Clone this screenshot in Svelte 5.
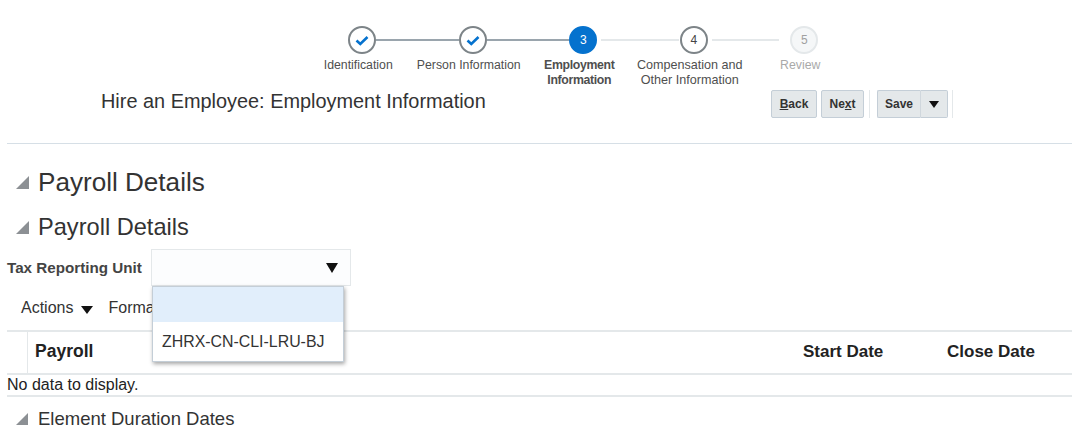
<script lang="ts">
	const steps = [
		{ id: 1, label: 'Identification', state: 'done' },
		{ id: 2, label: 'Person Information', state: 'done' },
		{ id: 3, label: 'Employment Information', state: 'active' },
		{ id: 4, label: 'Compensation and Other Information', state: 'upcoming' },
		{ id: 5, label: 'Review', state: 'disabled' }
	];
</script>

<div class="page">
	<ol class="train">
		{#each steps as step}
			<li class="step {step.state}">
				<div class="track">
					<span class="circle">
						{#if step.state === 'done'}
							<svg width="14" height="11" viewBox="0 0 14 11" aria-hidden="true">
								<path d="M1.5 5.5 L5.3 9 L12.5 2" fill="none" stroke="#0572ce" stroke-width="2.6" />
							</svg>
						{:else}
							{step.id}
						{/if}
					</span>
				</div>
				<span class="label">{step.label}</span>
			</li>
		{/each}
	</ol>

	<header class="head">
		<h1>Hire an Employee: Employment Information</h1>
		<div class="actions">
			<button class="btn back"><u>B</u>ack</button>
			<button class="btn next">Ne<u>x</u>t</button>
			<span class="sep"></span>
			<div class="split">
				<button class="btn save">Save</button>
				<button class="btn caret" aria-label="More"><i class="tri"></i></button>
			</div>
			<span class="sep"></span>
		</div>
	</header>

	<section class="body">
		<h2 class="sec big"><i class="disclosure"></i>Payroll Details</h2>
		<h3 class="sec mid"><i class="disclosure"></i>Payroll Details</h3>

		<div class="field">
			<span class="field-label">Tax Reporting Unit</span>
			<div class="select">
				<i class="tri"></i>
				<ul class="menu">
					<li class="selected"></li>
					<li>ZHRX-CN-CLI-LRU-BJ</li>
				</ul>
			</div>
		</div>

		<div class="toolbar">
			<span>Actions</span>
			<i class="tri"></i>
			<span class="format">Format</span>
		</div>

		<div class="table">
			<div class="thead">
				<span class="gutter"></span>
				<span class="col-payroll">Payroll</span>
				<span class="col-start">Start Date</span>
				<span class="col-close">Close Date</span>
			</div>
			<div class="empty">No data to display.</div>
		</div>

		<h3 class="sec small"><i class="disclosure"></i>Element Duration Dates</h3>
	</section>
</div>

<style>
	:global(body) {
		background: #fff;
	}

	.page {
		width: 1088px;
		height: 435px;
		overflow: hidden;
		font-family: 'Liberation Sans', Arial, sans-serif;
		color: #333;
		background: #fff;
	}

	/* train */
	.train {
		display: flex;
		list-style: none;
		margin: 0;
		padding: 26px 0 0 307px;
		height: 61px;
	}

	.step {
		width: 110.5px;
		display: flex;
		flex-direction: column;
		align-items: center;
		font-size: 12.3px;
		line-height: 15px;
		color: #4f4f4f;
		text-align: center;
	}

	.track {
		position: relative;
		width: 100%;
		display: flex;
		justify-content: center;
		margin-bottom: 4px;
	}

	.step:not(:last-child) .track::after {
		content: '';
		position: absolute;
		top: 13px;
		height: 2px;
		left: calc(50% + 14px);
		width: 82.5px;
		background: #e4e8ea;
	}

	.step.done .track::after {
		background: #9aa5ad;
	}

	.step.active .track::after {
		left: calc(50% + 18px);
		width: 78px;
	}

	.step.upcoming .track::after {
		left: calc(50% + 18px);
		width: 67px;
	}

	.label {
		margin-right: 8px;
	}

	.done .label {
		white-space: nowrap;
	}

	.circle {
		box-sizing: border-box;
		width: 28px;
		height: 28px;
		border-radius: 50%;
		border: 2px solid #7d8488;
		display: flex;
		align-items: center;
		justify-content: center;
		font-size: 12px;
		background: #fff;
	}

	.active .circle {
		background: #0572ce;
		border-color: #0572ce;
		color: #fff;
	}

	.active .label {
		font-weight: 700;
		letter-spacing: -0.35px;
		width: 80px;
	}

	.upcoming .label {
		font-size: 12.6px;
		width: 112px;
		flex: none;
	}

	.upcoming .circle {
		color: #444;
	}

	.disabled {
		color: #a9a9a9;
	}

	.disabled .circle {
		border-color: #e4e8ea;
		background: #f5f7f8;
		color: #a0a0a0;
	}

	/* title row */
	.head {
		display: flex;
		height: 56px;
		border-bottom: 1px solid #d6dfe6;
		margin: 0 16px 0 7px;
		padding-left: 94px;
		align-items: flex-start;
	}

	h1 {
		margin: 0;
		width: 670px;
		font-size: 19.9px;
		font-weight: 400;
		line-height: 28px;
	}

	.actions {
		display: flex;
		align-items: stretch;
		height: 28px;
		margin-top: 3px;
	}

	.btn {
		box-sizing: border-box;
		height: 28px;
		padding: 0;
		border: 1px solid #c4ced7;
		border-radius: 2px;
		background: #e4e8ea;
		font: 700 12px 'Liberation Sans', Arial, sans-serif;
		color: #333;
	}

	.back {
		width: 46px;
		margin-right: 4px;
	}

	.next {
		width: 43px;
	}

	.sep {
		width: 1px;
		background: #e4e8ea;
		margin: 0 7px 0 5px;
	}

	.sep:last-child {
		margin: 0 0 0 4px;
	}

	.split {
		display: flex;
		width: 71px;
	}

	.save {
		flex: 1;
		border-right: 1px solid #d0d7dd;
		border-radius: 2px 0 0 2px;
	}

	.caret {
		width: 27px;
		border-left: 0;
		border-radius: 0 2px 2px 0;
		display: flex;
		align-items: center;
		justify-content: center;
	}

	.tri {
		display: block;
		width: 0;
		height: 0;
		border-style: solid;
		border-width: 7px 5.5px 0;
		border-color: #111 transparent transparent;
	}

	/* content */
	.body {
		margin: 0 16px 0 7px;
	}

	.sec {
		display: flex;
		align-items: center;
		margin: 0;
		font-weight: 400;
		color: #333;
	}

	.disclosure {
		width: 0;
		height: 0;
		margin: 0 9px 0 9px;
		border-style: solid;
		border-width: 0 0 13px 13px;
		border-color: transparent transparent #8c9094;
	}

	.big {
		height: 38px;
		margin-top: 19px;
		font-size: 26.1px;
	}

	.mid {
		height: 32px;
		margin-top: 10px;
		font-size: 23.6px;
	}

	.small {
		height: 22px;
		margin-top: 11px;
		font-size: 18.5px;
	}

	.small .disclosure {
		border-width: 0 0 12px 12px;
		margin-right: 10px;
	}

	.field {
		display: flex;
		align-items: center;
		margin-top: 6px;
		height: 37px;
	}

	.field-label {
		width: 144px;
		font-size: 15.2px;
		font-weight: 700;
		color: #444;
	}

	.select {
		box-sizing: border-box;
		position: relative;
		width: 200px;
		height: 37px;
		border: 1px solid #e4e8ea;
		display: flex;
		align-items: center;
		justify-content: flex-end;
		padding-right: 12px;
		background: #fcfdfe;
	}

	.select > .tri {
		border-width: 10px 6.5px 0;
	}

	.menu {
		position: absolute;
		z-index: 2;
		top: 36px;
		left: 0;
		width: 192px;
		box-sizing: border-box;
		margin: 0;
		padding: 0;
		list-style: none;
		background: #fff;
		border: 1px solid #c4ced7;
		box-shadow: 1px 2px 4px rgba(0, 0, 0, 0.35);
		font-size: 15.9px;
		color: #333;
	}

	.menu li {
		height: 39px;
		line-height: 39px;
		padding-left: 9px;
	}

	.menu .selected {
		height: 35px;
		background: #e1eefb;
	}

	.toolbar {
		display: flex;
		align-items: center;
		height: 44px;
		padding-left: 14px;
		font-size: 16px;
		color: #333;
	}

	.toolbar .tri {
		margin: 3px 0 0 8px;
		border-width: 8px 6.5px 0;
	}

	.format {
		margin-left: 15px;
	}

	.table {
		border-top: 2px solid #e4e8ea;
		border-bottom: 2px solid #e4e8ea;
	}

	.thead {
		display: flex;
		align-items: center;
		height: 41px;
		border-bottom: 2px solid #e4e8ea;
		font-size: 17px;
		font-weight: 700;
		color: #222;
	}

	.thead span:not(.gutter) {
		padding-bottom: 2px;
	}

	.gutter {
		width: 20px;
		height: 100%;
		border-right: 1px solid #e4e8ea;
	}

	.col-payroll {
		margin-left: 7px;
		width: 768px;
		font-size: 17.5px;
	}

	.col-start {
		width: 144px;
	}

	.empty {
		height: 20px;
		line-height: 20px;
		font-size: 16px;
		color: #222;
	}
</style>
